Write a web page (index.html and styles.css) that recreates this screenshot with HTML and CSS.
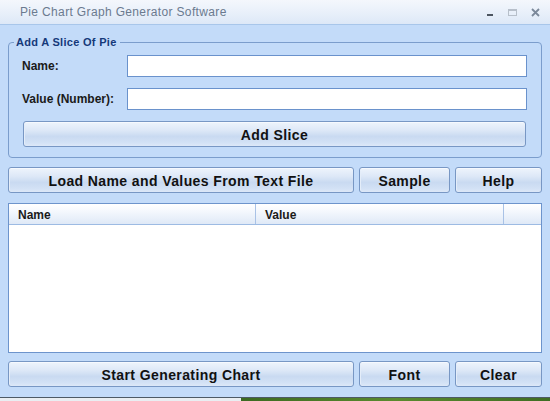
FILE: index.html
```html
<!DOCTYPE html>
<html>
<head>
<meta charset="utf-8">
<title>Pie Chart Graph Generator Software</title>
<link rel="stylesheet" href="styles.css">
</head>
<body>
<div class="window">
  <div class="titlebar">
    <span class="title">Pie Chart Graph Generator Software</span>
    <div class="controls">
      <svg class="ctl" width="12" height="12" viewBox="0 0 12 12"><rect x="3" y="7" width="6" height="2" fill="#4d5561"/></svg>
      <svg class="ctl" width="12" height="12" viewBox="0 0 12 12"><rect x="1.5" y="2.5" width="8" height="6" fill="none" stroke="#b7bfca" stroke-width="1"/><rect x="1.5" y="2.5" width="8" height="1.5" fill="#b7bfca"/></svg>
      <svg class="ctl" width="12" height="12" viewBox="0 0 12 12"><path d="M2 2 L9 9 M9 2 L2 9" stroke="#7b889a" stroke-width="1.8" fill="none"/></svg>
    </div>
  </div>
  <div class="content">
    <div class="group">
      <span class="legend">Add A Slice Of Pie</span>
      <div class="field">
        <label class="label">Name:</label>
        <input class="input" type="text">
      </div>
      <div class="field">
        <label class="label">Value (Number):</label>
        <input class="input" type="text">
      </div>
      <button class="btn btn-add">Add Slice</button>
    </div>
    <div class="btnrow">
      <button class="btn">Load Name and Values From Text File</button>
      <button class="btn">Sample</button>
      <button class="btn">Help</button>
    </div>
    <div class="list">
      <div class="list-head">
        <div class="col col-name">Name</div>
        <div class="col col-value">Value</div>
        <div class="col col-rest"></div>
      </div>
    </div>
    <div class="btnrow btnrow-bottom">
      <button class="btn">Start Generating Chart</button>
      <button class="btn">Font</button>
      <button class="btn">Clear</button>
    </div>
  </div>
</div>
<div class="desktop">
  <div class="desk-left"></div>
  <div class="desk-right"></div>
</div>
</body>
</html>
```
FILE: styles.css
```css
html, body {
  margin: 0;
  padding: 0;
}
body {
  width: 550px;
  height: 401px;
  overflow: hidden;
  background: #c3dbf9;
  font-family: "Liberation Sans", Arial, sans-serif;
}
.window {
  height: 397px;
  background: #c3dbf9;
  box-sizing: border-box;
}
.titlebar {
  height: 25px;
  box-sizing: border-box;
  border-bottom: 1px solid #a8c6ea;
  background: linear-gradient(to bottom, #f4f7fc 0%, #e9f0fa 50%, #dde8f7 100%);
  display: flex;
  align-items: center;
  justify-content: space-between;
}
.title {
  margin-left: 20px;
  font-size: 12px;
  color: #6b7a8f;
  letter-spacing: 0.35px;
}
.controls {
  display: flex;
  gap: 11px;
  margin-right: 8px;
  margin-top: 2px;
}
.ctl {
  display: block;
}
.content {
  padding: 0 8px;
}
.group {
  position: relative;
  margin-top: 17px;
  border: 1px solid #7b9dcc;
  border-radius: 4px;
  padding: 12px 15px 10px 14px;
}
.legend {
  position: absolute;
  top: -8px;
  left: 5px;
  padding: 0 3px 0 2px;
  background: #c3dbf9;
  font-size: 11px;
  font-weight: bold;
  color: #15397a;
  line-height: 14px;
  letter-spacing: 0.3px;
}
.field {
  display: grid;
  grid-template-columns: 104px 1fr;
  align-items: center;
  margin-bottom: 11px;
}
.label {
  font-size: 12px;
  font-weight: bold;
  color: #1a1a1a;
  margin-left: -1px;
}
.input {
  height: 22px;
  box-sizing: border-box;
  margin: 0 -1px 0 0;
  border: 1px solid #6a92cc;
  background: #ffffff;
  padding: 0 3px;
  outline: none;
}
.btn {
  display: block;
  width: 100%;
  height: 26px;
  box-sizing: border-box;
  margin: 0;
  padding: 2px 0 0 0;
  border: 1px solid #7897c4;
  border-radius: 3px;
  background: linear-gradient(to bottom, #eef4fc 0%, #dde8f7 35%, #c9daf1 60%, #d2e1f5 85%, #dde8f8 100%);
  box-shadow: inset 0 1px 0 #f6f9fe, inset 1px 0 0 #e4edf9;
  font-family: "Liberation Sans", Arial, sans-serif;
  font-size: 14px;
  font-weight: bold;
  color: #111111;
  letter-spacing: 0.4px;
}
.btn-add {
  margin-top: 1px;
}
.btnrow {
  display: grid;
  grid-template-columns: 1fr 91px 87px;
  gap: 5px;
  margin-top: 9px;
}
.btnrow-bottom {
  margin-top: 8px;
}
.list {
  margin-top: 10px;
  height: 150px;
  box-sizing: border-box;
  border: 1px solid #6d94cc;
  background: #ffffff;
}
.list-head {
  display: flex;
  height: 20px;
  border-bottom: 1px solid #9dbbe3;
  background: linear-gradient(to bottom, #ffffff 0%, #f3f7fd 40%, #dfe9f7 100%);
}
.col {
  font-size: 12px;
  font-weight: bold;
  color: #1a1a1a;
  line-height: 18px;
  padding: 2px 0 0 9px;
  box-sizing: border-box;
}
.col-name {
  width: 247px;
  border-right: 1px solid #a9c2e6;
}
.col-value {
  width: 248px;
  border-right: 1px solid #a9c2e6;
}
.col-rest {
  flex: 1;
}
.desktop {
  display: flex;
  height: 4px;
  border-top: 1px solid #4d5a66;
}
.desk-left {
  width: 241px;
  background: #e9eef2;
}
.desk-right {
  flex: 1;
  background: linear-gradient(to right, #3c6a22, #5a8a2e 50%, #3f6d24);
}
```
